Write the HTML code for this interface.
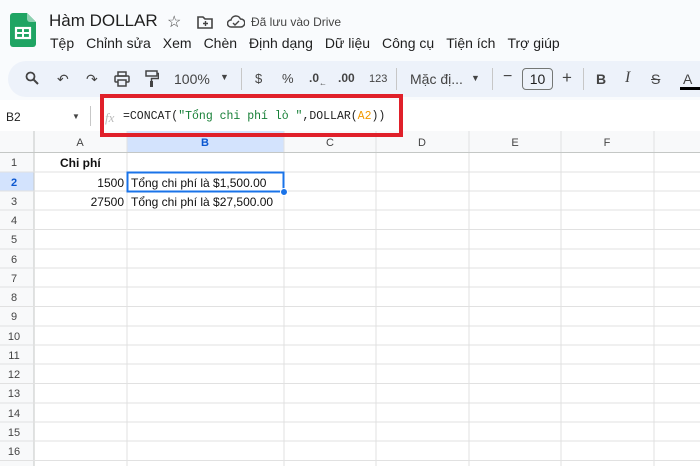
<!DOCTYPE html>
<html><head><meta charset="utf-8"><style>
*{margin:0;padding:0;box-sizing:border-box}
body{width:700px;height:466px;overflow:hidden;background:#f9fbfd;font-family:"Liberation Sans",Arial,sans-serif;position:relative;color:#1f1f1f}
.abs{position:absolute}
.menu span{margin-right:12px}
.tb{position:absolute;top:61px;left:8px;width:720px;height:36px;background:#edf2fa;border-radius:18px}
.ic{position:absolute;top:71px;font-size:14px;color:#444}
.grid{position:absolute;left:0;top:131px;width:700px;height:335px;background:#fff}
</style></head><body>
<svg class="abs" style="left:10px;top:13px" width="26" height="34" viewBox="0 0 26 34"><path d="M3 0h14l9 9v22a3 3 0 0 1-3 3H3a3 3 0 0 1-3-3V3a3 3 0 0 1 3-3z" fill="#1fa463"/><path d="M17 0v6a3 3 0 0 0 3 3h6z" fill="#8ed1b1"/><rect x="6" y="15" width="14" height="10" fill="none" stroke="#fff" stroke-width="2.2"/><path d="M6 20h14M13 15v10" stroke="#fff" stroke-width="2"/></svg>
<div class="abs" style="left:49px;top:11px;font-size:17px">Hàm DOLLAR</div>
<div class="abs" style="left:167px;top:12px;font-size:16px;color:#444">☆</div>
<svg class="abs" style="left:197px;top:16px" width="16" height="13" viewBox="0 0 16 13"><path d="M1 1h5l2 2h7v9H1z" fill="none" stroke="#444" stroke-width="1.6"/><path d="M6 7.5h5M8.5 5v5" stroke="#444" stroke-width="1.4"/></svg>
<svg class="abs" style="left:227px;top:15px" width="18" height="13" viewBox="0 0 18 13"><path d="M4 12a3.5 3.5 0 0 1 0-7 5 5 0 0 1 9.5-1 4 4 0 0 1 0.5 8z" fill="none" stroke="#444" stroke-width="1.5"/><path d="M6 8l2 2 4-4" fill="none" stroke="#444" stroke-width="1.4"/></svg>
<div class="abs" style="left:251px;top:15px;font-size:12px;color:#444">Đã lưu vào Drive</div>
<div class="abs menu" style="left:50px;top:35px;font-size:14px;white-space:nowrap"><span>Tệp</span><span>Chỉnh sửa</span><span>Xem</span><span>Chèn</span><span>Định dạng</span><span>Dữ liệu</span><span>Công cụ</span><span>Tiện ích</span><span>Trợ giúp</span></div>
<div class="tb"></div>
<svg class="abs" style="left:25px;top:71px" width="14" height="14" viewBox="0 0 14 14"><circle cx="5.5" cy="5.5" r="4" fill="none" stroke="#444" stroke-width="1.8"/><path d="M8.5 8.5l4.5 4.5" stroke="#444" stroke-width="2"/></svg>
<div class="ic" style="left:57px">↶</div>
<div class="ic" style="left:86px">↷</div>
<svg class="abs" style="left:114px;top:71px" width="16" height="16" viewBox="0 0 16 16"><rect x="4" y="1" width="8" height="4" fill="none" stroke="#444" stroke-width="1.5"/><rect x="1" y="5" width="14" height="6" rx="1" fill="none" stroke="#444" stroke-width="1.5"/><rect x="4" y="9" width="8" height="6" fill="#edf2fa" stroke="#444" stroke-width="1.5"/></svg>
<svg class="abs" style="left:145px;top:70px" width="14" height="18" viewBox="0 0 14 18"><rect x="1" y="1" width="11" height="5" fill="none" stroke="#444" stroke-width="1.5"/><path d="M12 3.5h1.5v5H6.5v3" fill="none" stroke="#444" stroke-width="1.5"/><rect x="5" y="11" width="3" height="6" fill="#444"/></svg>
<div class="ic" style="left:174px;top:71px">100%</div>
<div class="ic" style="left:220px;top:72px;font-size:9px">▼</div>
<div class="abs" style="left:241px;top:68px;width:1px;height:22px;background:#c7c7c7"></div>
<div class="ic" style="left:255px;font-size:13px">$</div>
<div class="ic" style="left:282px;font-size:13px">%</div>
<div class="ic" style="left:309px;font-size:12px;font-weight:bold">.0<sub style="font-size:8px">←</sub></div>
<div class="ic" style="left:338px;font-size:12px;font-weight:bold">.00</div>
<div class="ic" style="left:369px;top:73px;font-size:11px">123</div>
<div class="abs" style="left:396px;top:68px;width:1px;height:22px;background:#c7c7c7"></div>
<div class="ic" style="left:410px">Mặc đị...</div>
<div class="ic" style="left:471px;top:73px;font-size:9px">▼</div>
<div class="abs" style="left:492px;top:68px;width:1px;height:22px;background:#c7c7c7"></div>
<div class="ic" style="left:503px;font-size:16px;top:68px">−</div>
<div class="abs" style="left:522px;top:68px;width:31px;height:22px;border:1px solid #747775;border-radius:4px;font-size:14px;text-align:center;line-height:20px">10</div>
<div class="ic" style="left:562px;font-size:17px;top:68px">+</div>
<div class="abs" style="left:583px;top:68px;width:1px;height:22px;background:#c7c7c7"></div>
<div class="ic" style="left:596px;font-weight:bold">B</div>
<div class="ic" style="left:625px;font-style:italic;font-family:'Liberation Serif',serif;font-size:16px;top:69px">I</div>
<div class="ic" style="left:651px;text-decoration:line-through">S</div>
<div class="ic" style="left:683px">A</div>
<div class="abs" style="left:680px;top:87px;width:20px;height:3px;background:#000"></div>
<div class="abs" style="left:0;top:100px;width:700px;height:31px;background:#fff"></div>
<div class="abs" style="left:6px;top:110px;font-size:12px">B2</div>
<div class="abs" style="left:72px;top:112px;font-size:8px;color:#444">▼</div>
<div class="abs" style="left:90px;top:106px;width:1px;height:20px;background:#c7c7c7"></div>
<div class="abs" style="left:105px;top:110px;font-size:13px;color:#bbb;font-style:italic;font-family:'Liberation Serif',serif">fx</div>
<div class="abs" style="left:123px;top:110px;font-size:11.5px;font-family:'Liberation Mono',monospace;white-space:nowrap">=CONCAT(<span style="color:#188038">"Tổng chi phí lò "</span>,DOLLAR(<span style="color:#f29900">A2</span>))</div>
<div class="grid">
<svg width="700" height="335" style="position:absolute;left:0;top:0">
<rect x="0" y="0" width="700" height="21" fill="#f8f9fa"/>
<rect x="127" y="0" width="157" height="21" fill="#d3e3fd"/>
<rect x="0" y="21" width="34" height="314" fill="#f8f9fa"/>
<rect x="0" y="41" width="34" height="19" fill="#d3e3fd"/>
<g stroke="#e1e1e1" stroke-width="1">
<line x1="34" y1="0" x2="34" y2="335" stroke="#c4c7c5"/>
<line x1="127" y1="0" x2="127" y2="335"/><line x1="284" y1="0" x2="284" y2="335"/><line x1="376" y1="0" x2="376" y2="335"/><line x1="469" y1="0" x2="469" y2="335"/><line x1="561" y1="0" x2="561" y2="335"/><line x1="654" y1="0" x2="654" y2="335"/>
<line x1="0" y1="21.5" x2="700" y2="21.5" stroke="#c4c7c5"/>
<line x1="0" y1="41" x2="700" y2="41"/><line x1="0" y1="60" x2="700" y2="60"/><line x1="0" y1="79" x2="700" y2="79"/><line x1="0" y1="98.5" x2="700" y2="98.5"/><line x1="0" y1="118" x2="700" y2="118"/><line x1="0" y1="137" x2="700" y2="137"/><line x1="0" y1="156" x2="700" y2="156"/><line x1="0" y1="175.5" x2="700" y2="175.5"/><line x1="0" y1="195" x2="700" y2="195"/><line x1="0" y1="214" x2="700" y2="214"/><line x1="0" y1="233" x2="700" y2="233"/><line x1="0" y1="252.5" x2="700" y2="252.5"/><line x1="0" y1="272" x2="700" y2="272"/><line x1="0" y1="291" x2="700" y2="291"/><line x1="0" y1="310" x2="700" y2="310"/><line x1="0" y1="329.5" x2="700" y2="329.5"/>
</g>
<g font-size="11" fill="#444" text-anchor="middle" font-family="Liberation Sans">
<text x="80" y="15">A</text><text x="205" y="15" fill="#0b57d0" font-weight="bold">B</text><text x="330" y="15">C</text><text x="422" y="15">D</text><text x="515" y="15">E</text><text x="607" y="15">F</text>
<text x="14" y="35">1</text><text x="14" y="55" fill="#0b57d0" font-weight="bold">2</text><text x="14" y="74">3</text><text x="14" y="93">4</text><text x="14" y="112">5</text><text x="14" y="132">6</text><text x="14" y="151">7</text><text x="14" y="170">8</text><text x="14" y="189">9</text><text x="14" y="209">10</text><text x="14" y="228">11</text><text x="14" y="247">12</text><text x="14" y="266">13</text><text x="14" y="286">14</text><text x="14" y="305">15</text><text x="14" y="324">16</text>
</g>
<g font-size="12" fill="#111" font-family="Liberation Sans">
<text x="60" y="36" font-weight="bold">Chi phí</text>
<text x="124" y="56" text-anchor="end">1500</text><text x="124" y="75" text-anchor="end">27500</text>
<text x="131" y="56">Tổng chi phí là $1,500.00</text><text x="131" y="75">Tổng chi phí là $27,500.00</text>
</g>
<rect x="127.5" y="41.5" width="156" height="19" fill="none" stroke="#1a73e8" stroke-width="2"/>
<circle cx="284" cy="61" r="3.5" fill="#1a73e8" stroke="#fff" stroke-width="1"/>
</svg>
</div>
<div class="abs" style="left:100px;top:94px;width:303px;height:43px;border:4px solid #e0202a;z-index:5"></div>
</body></html>
